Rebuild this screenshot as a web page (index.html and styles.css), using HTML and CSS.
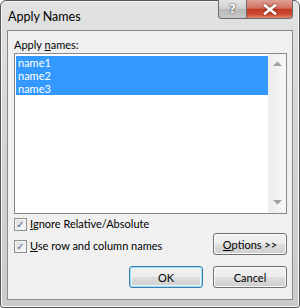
FILE: index.html
```html
<!DOCTYPE html>
<html lang="en">
<head>
    <meta charset="UTF-8">
    <title>Apply Names</title>
    <link rel="stylesheet" href="styles.css">
</head>
<body>
    <div class="window">
        <div class="titlebar">
            <span class="title">Apply Names</span>
            <div class="caption-buttons">
                <div class="cap-btn help">?</div>
                <div class="cap-btn close">
                    <svg width="14" height="11" viewBox="0 0 14 11">
                        <path d="M2 1.5 L12 9.5 M12 1.5 L2 9.5" stroke="#fff" stroke-width="2.6" stroke-linecap="square"/>
                    </svg>
                </div>
            </div>
        </div>
        <div class="client">
            <div class="label">Apply <u>n</u>ames:</div>
            <div class="listbox">
                <ul class="items">
                    <li class="selected">name1</li>
                    <li class="selected">name2</li>
                    <li class="selected">name3</li>
                </ul>
                <div class="scrollbar">
                    <svg class="arrow" width="9" height="5" viewBox="0 0 9 5"><path d="M0 5 L4.5 0.5 L9 5 Z" fill="#a0a0a0"/></svg>
                    <svg class="arrow" width="9" height="5" viewBox="0 0 9 5"><path d="M0 0 L4.5 4.5 L9 0 Z" fill="#a0a0a0"/></svg>
                </div>
            </div>
            <div class="options-row">
                <div class="checks">
                    <label class="check"><span class="box">&#10003;</span><span><u>I</u>gnore Relative/Absolute</span></label>
                    <label class="check"><span class="box">&#10003;</span><span><u>U</u>se row and column names</span></label>
                </div>
                <button class="btn"><u>O</u>ptions &gt;&gt;</button>
            </div>
            <div class="actions">
                <button class="btn default">OK</button>
                <button class="btn">Cancel</button>
            </div>
        </div>
    </div>
</body>
</html>
```

FILE: styles.css
```css
body {
    margin: 0;
    background-color: #fff;
    font-family: Lato, "Noto Sans", sans-serif;
    font-size: 11px;
    color: #000;
}
.window {
    width: 300px;
    height: 308px;
    box-sizing: border-box;
    border: 1px solid #5a5a5a;
    border-radius: 6px 6px 3px 3px;
    background: linear-gradient(to bottom, #e2e2e2 0%, #d6d6d6 40%, #cbcbcb 100%);
    display: flex;
    flex-direction: column;
    box-shadow: inset 0 0 0 1px #f4f4f4;
}
.titlebar {
    height: 29px;
    display: flex;
    align-items: flex-start;
    padding-left: 7px;
}
.title {
    font-size: 12.5px;
    margin-top: 8px;
    color: #000;
}
.caption-buttons {
    margin-left: auto;
    margin-right: 6px;
    margin-top: -1px;
    display: flex;
}
.cap-btn {
    height: 19px;
    box-sizing: border-box;
    border: 1px solid #6b6b6b;
    border-top: none;
    display: flex;
    align-items: center;
    justify-content: center;
}
.help {
    width: 28px;
    border-radius: 0 0 0 4px;
    border-right: none;
    background: linear-gradient(to bottom, #e4e4e4 0%, #cfcfcf 50%, #b8b8b8 51%, #c8c8c8 100%);
    color: #fff;
    font-family: "DejaVu Sans", sans-serif;
    font-weight: bold;
    font-size: 12px;
    text-shadow: 0 0 2px #444, 0 0 1px #333;
}
.close {
    width: 47px;
    border-radius: 0 0 4px 0;
    background: linear-gradient(to bottom, #e0a197 0%, #d3705f 45%, #c13a22 52%, #cc4a33 80%, #e08a70 100%);
}
.close svg {
    filter: drop-shadow(0 0 1px #5a1a10);
}
.client {
    flex: 1;
    margin: 0 6px 7px 6px;
    border: 1px solid #8a8a8a;
    background-color: #f0f0f0;
    padding: 6px 5px 0 6px;
    display: flex;
    flex-direction: column;
}
.label {
    height: 16px;
    line-height: 15px;
}
.listbox {
    height: 159px;
    border: 1px solid #828790;
    background-color: #fff;
    display: flex;
}
.items {
    flex: 1;
    list-style: none;
    margin: 0;
    padding: 2px 0 0 1px;
}
.items li {
    height: 13px;
    line-height: 13px;
    padding-left: 2px;
}
.items li.selected {
    background-color: #3399ff;
    color: #fff;
}
.scrollbar {
    width: 17px;
    background: linear-gradient(to right, #ececec, #f7f7f7);
    border-left: 1px solid #f0f0f0;
    display: flex;
    flex-direction: column;
    justify-content: space-between;
    align-items: center;
    padding: 7px 0 8px;
}
.options-row {
    display: flex;
    align-items: flex-end;
    margin-top: 3px;
}
.checks {
    flex: 1;
    display: flex;
    flex-direction: column;
    gap: 8px;
}
.check {
    display: flex;
    align-items: center;
    gap: 3px;
    line-height: 14px;
}
.box {
    width: 11px;
    height: 11px;
    border: 1px solid #8e8f8f;
    background: linear-gradient(135deg, #dcdcdc, #fafafa);
    box-shadow: inset 0 0 0 1px #f4f4f4;
    color: #4a5f97;
    font-family: "DejaVu Sans", sans-serif;
    font-size: 10px;
    font-weight: bold;
    line-height: 11px;
    text-align: center;
}
.btn {
    width: 74px;
    height: 22px;
    border: 1px solid #707070;
    border-radius: 3px;
    background: linear-gradient(to bottom, #f2f2f2 0%, #ebebeb 50%, #dddddd 51%, #cfcfcf 100%);
    box-shadow: inset 0 0 0 1px #fbfbfb;
    font-family: inherit;
    font-size: 11px;
    color: #000;
    padding: 0;
}
.btn.default {
    border-color: #3c7fb1;
    box-shadow: inset 0 0 0 1px #9ed8f2, inset 0 0 0 2px #e8f6fd;
}
.options-row .btn {
    margin-bottom: -2px;
}
.actions {
    display: flex;
    justify-content: flex-end;
    gap: 10px;
    margin-top: 13px;
}
```
